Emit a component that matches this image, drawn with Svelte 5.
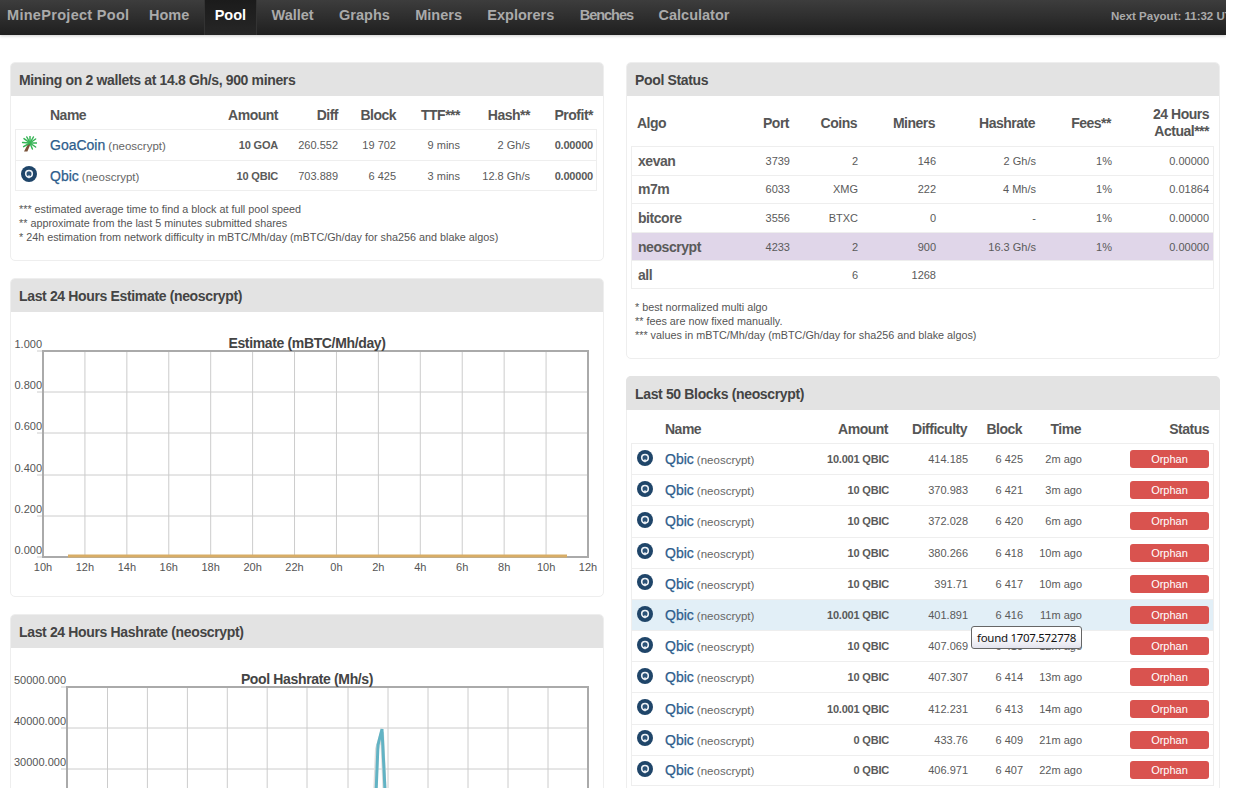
<script>
  const navItems = ['Home', 'Pool', 'Wallet', 'Graphs', 'Miners', 'Explorers', 'Benches', 'Calculator'];
  const wallets = [
    { icon: 'goa', name: 'GoaCoin', amount: '10 GOA', diff: '260.552', block: '19 702', ttf: '9 mins', hash: '2 Gh/s', profit: '0.00000' },
    { icon: 'qbic', name: 'Qbic', amount: '10 QBIC', diff: '703.889', block: '6 425', ttf: '3 mins', hash: '12.8 Gh/s', profit: '0.00000' }
  ];
  const algos = [
    ['xevan', '3739', '2', '146', '2 Gh/s', '1%', '0.00000'],
    ['m7m', '6033', 'XMG', '222', '4 Mh/s', '1%', '0.01864'],
    ['bitcore', '3556', 'BTXC', '0', '-', '1%', '0.00000'],
    ['neoscrypt', '4233', '2', '900', '16.3 Gh/s', '1%', '0.00000'],
    ['all', '', '6', '1268', '', '', '']
  ];
  const blocks = [
    ['10.001 QBIC', '414.185', '6 425', '2m ago'],
    ['10 QBIC', '370.983', '6 421', '3m ago'],
    ['10 QBIC', '372.028', '6 420', '6m ago'],
    ['10 QBIC', '380.266', '6 418', '10m ago'],
    ['10 QBIC', '391.71', '6 417', '10m ago'],
    ['10.001 QBIC', '401.891', '6 416', '11m ago'],
    ['10 QBIC', '407.069', '6 415', '12m ago'],
    ['10 QBIC', '407.307', '6 414', '13m ago'],
    ['10.001 QBIC', '412.231', '6 413', '14m ago'],
    ['0 QBIC', '433.76', '6 409', '21m ago'],
    ['0 QBIC', '406.971', '6 407', '22m ago']
  ];
  const hoursX = ['10h', '12h', '14h', '16h', '18h', '20h', '22h', '0h', '2h', '4h', '6h', '8h', '10h', '12h'];
  const estX = hoursX.map((_, i) => 43 + (i * 545) / 13);
  const estY = [
    ['1.000', 351], ['0.800', 392], ['0.600', 433], ['0.400', 475], ['0.200', 516], ['0.000', 557]
  ];
  const hashX = [67, 107.5, 147.4, 187.4, 227.3, 267.2, 307, 348, 388, 428, 468, 508, 548, 588];
  const hashY = [
    ['50000.000', 687], ['40000.000', 728], ['30000.000', 769], ['20000.000', 810], ['10000.000', 851], ['0.000', 892]
  ];
</script>

{#snippet qbic()}
  <svg class="coin" viewBox="0 0 16 16" aria-hidden="true">
    <circle cx="8" cy="8" r="8" fill="#1f4569" />
    <circle cx="8" cy="7.8" r="3.3" fill="#2c5378" stroke="#eef2f6" stroke-width="1.6" />
    <path d="M8 9.2v3" stroke="#eef2f6" stroke-width="1.3" />
  </svg>
{/snippet}

{#snippet goa()}
  <svg class="coin" viewBox="0 0 16 16" aria-hidden="true">
    <path d="M7.5 7 3 15.5h3.4L9.5 8z" fill="#7a5238" />
    <g stroke="#36b455" stroke-width="1.5" stroke-linecap="round">
      <path d="M9 7 9 .6" />
      <path d="M9 7 5.8 1" />
      <path d="M9 7 3 2.6" />
      <path d="M9 7 12.4 1" />
      <path d="M9 7 14.6 3" />
      <path d="M9 7 1.6 6.6" />
      <path d="M9 7 15.6 7" />
      <path d="M9 7 2.6 10.6" />
      <path d="M9 7 14.6 11" />
      <path d="M9 7 11.4 13" />
    </g>
  </svg>
{/snippet}

<div class="page">
  <nav class="nav">
    <span class="brand">MineProject Pool</span>
    {#each navItems as item}
      <span class="nav-item" class:active={item === 'Pool'} class:tight={item === 'Benches'}>{item}</span>
    {/each}
    <span class="nav-space"></span>
    <span class="payout">Next Payout: 11:32 UTC</span>
  </nav>

  <main class="columns">
    <div class="col">
      <section class="panel">
        <h2>Mining on 2 wallets at 14.8 Gh/s, 900 miners</h2>
        <div class="body">
          <table class="wallets">
            <colgroup><col class="w31" /><col class="w166" /><col class="w70" /><col class="w60" /><col class="w58" /><col class="w64" /><col class="w70" /><col class="w63" /></colgroup>
            <thead>
              <tr><th></th><th class="l">Name</th><th>Amount</th><th>Diff</th><th>Block</th><th>TTF***</th><th>Hash**</th><th>Profit*</th></tr>
            </thead>
            <tbody>
              {#each wallets as w}
                <tr>
                  <td class="ic">{#if w.icon === 'goa'}{@render goa()}{:else}{@render qbic()}{/if}</td>
                  <td class="l"><span class="link">{w.name}</span> <span class="algo-tag">(neoscrypt)</span></td>
                  <td class="b">{w.amount}</td><td>{w.diff}</td><td>{w.block}</td><td>{w.ttf}</td><td>{w.hash}</td><td class="b">{w.profit}</td>
                </tr>
              {/each}
            </tbody>
          </table>
          <p class="notes">*** estimated average time to find a block at full pool speed<br />** approximate from the last 5 minutes submitted shares<br />* 24h estimation from network difficulty in mBTC/Mh/day (mBTC/Gh/day for sha256 and blake algos)</p>
        </div>
      </section>

      <section class="panel">
        <h2>Last 24 Hours Estimate (neoscrypt)</h2>
        <svg class="chart" width="592" height="284" viewBox="11 312 592 284">
          {#each estX as x}<line class="grid" x1={x} x2={x} y1="351" y2="557" />{/each}
          {#each estY as [label, y]}
            <line class="grid" x1="37" x2="588" y1={y} y2={y} />
            <text class="tick" x="42" y={y - 3} text-anchor="end">{label}</text>
          {/each}
          <rect class="frame" x="43" y="351" width="545" height="206" />
          {#each hoursX as h, i}<text class="tick" x={estX[i]} y="571" text-anchor="middle">{h}</text>{/each}
          <text class="title" x="307" y="348" text-anchor="middle">Estimate (mBTC/Mh/day)</text>
          <line x1="68" x2="567" y1="556" y2="556" stroke="#d8ad66" stroke-width="3" />
        </svg>
      </section>

      <section class="panel">
        <h2>Last 24 Hours Hashrate (neoscrypt)</h2>
        <svg class="chart" width="592" height="284" viewBox="11 648 592 284">
          {#each hashX as x}<line class="grid" x1={x} x2={x} y1="687" y2="892" />{/each}
          {#each hashY as [label, y]}
            <line class="grid" x1="61" x2="588" y1={y} y2={y} />
            <text class="tick" x="66" y={y - 3} text-anchor="end">{label}</text>
          {/each}
          <rect class="frame" x="67" y="687" width="521" height="205" />
          <text class="title" x="307" y="684" text-anchor="middle">Pool Hashrate (Mh/s)</text>
          <path d="M371 892 L377 749 L382 732 L389 892" fill="none" stroke="#ddd" stroke-width="4" />
          <path d="M372 892 L378 745 L382 729 L390 892" fill="none" stroke="#62b3c4" stroke-width="3" />
        </svg>
      </section>
    </div>

    <div class="col">
      <section class="panel">
        <h2>Pool Status</h2>
        <div class="body">
          <table class="status">
            <colgroup><col class="w100" /><col class="w63" /><col class="w68" /><col class="w78" /><col class="w100" /><col class="w76" /><col class="w98" /></colgroup>
            <thead>
              <tr><th class="l">Algo</th><th>Port</th><th>Coins</th><th>Miners</th><th>Hashrate</th><th>Fees**</th><th>24 Hours<br />Actual***</th></tr>
            </thead>
            <tbody>
              {#each algos as a}
                <tr class:sel={a[0] === 'neoscrypt'}>
                  <td class="l name">{a[0]}</td>
                  {#each a.slice(1) as v}<td>{v}</td>{/each}
                </tr>
              {/each}
            </tbody>
          </table>
          <p class="notes">* best normalized multi algo<br />** fees are now fixed manually.<br />*** values in mBTC/Mh/day (mBTC/Gh/day for sha256 and blake algos)</p>
        </div>
      </section>

      <section class="panel tall">
        <h2>Last 50 Blocks (neoscrypt)</h2>
        <div class="body">
          <table class="blocks">
            <colgroup><col class="w30" /><col class="w140" /><col class="w92" /><col class="w79" /><col class="w55" /><col class="w59" /><col class="w128" /></colgroup>
            <thead>
              <tr><th></th><th class="l">Name</th><th>Amount</th><th>Difficulty</th><th>Block</th><th>Time</th><th>Status</th></tr>
            </thead>
            <tbody>
              {#each blocks as b}
                <tr class:hover={b[2] === '6 416'}>
                  <td class="ic">{@render qbic()}</td>
                  <td class="l"><span class="link">Qbic</span> <span class="algo-tag">(neoscrypt)</span></td>
                  <td class="b">{b[0]}</td><td>{b[1]}</td><td>{b[2]}</td><td>{b[3]}</td>
                  <td><span class="badge">Orphan</span></td>
                </tr>
              {/each}
            </tbody>
          </table>
        </div>
        <div class="tooltip">found 1707.572778</div>
      </section>
    </div>
  </main>
</div>

<style>
  :global(body) {
    margin: 0;
    background: #fff;
  }
  .page {
    width: 1226px;
    height: 788px;
    overflow: hidden;
    font-family: "Liberation Sans", Arial, sans-serif;
    color: #555;
  }
  .nav {
    display: flex;
    align-items: stretch;
    height: 35px;
    padding-left: 7px;
    background: linear-gradient(#3d3d3d, #1f1f1f);
    box-shadow: 0 1px 3px rgba(0, 0, 0, 0.2);
    color: #aaa;
    font-size: 14.5px;
    font-weight: bold;
    line-height: 30px;
    white-space: nowrap;
  }
  .brand {
    width: 131px;
    letter-spacing: 0.3px;
  }
  .nav-item {
    padding: 0 11px;
    margin-right: 3.4px;
  }
  .nav-item.tight {
    letter-spacing: -1px;
  }
  .nav-item.active {
    color: #fff;
    background: linear-gradient(#1b1b1b, #262626);
    box-shadow: inset 1px 0 #333, inset -1px 0 #333;
  }
  .nav-space {
    flex: 1;
    min-width: 0;
  }
  .payout {
    flex: none;
    width: 115px;
    overflow: hidden;
    font-size: 11.5px;
    line-height: 32px;
  }
  .columns {
    display: grid;
    grid-template-columns: 594px 594px;
    column-gap: 22px;
    padding: 27px 6px 0 10px;
  }
  .col {
    display: flex;
    flex-direction: column;
    gap: 17px;
  }
  .panel {
    position: relative;
    flex: none;
    border: 1px solid #eee;
    border-radius: 5px;
    background: #fff;
    overflow: hidden;
  }
  .tall {
    overflow: visible;
  }
  h2 {
    margin: -1px -1px 0;
    height: 34px;
    padding: 0 9px;
    background: #e3e3e3;
    border-radius: 5px 5px 0 0;
    color: #444;
    font-size: 14px;
    font-weight: bold;
    letter-spacing: -0.35px;
    line-height: 37px;
  }
  .body {
    padding: 0 4px 16px;
  }
  .chart {
    display: block;
  }
  .grid {
    stroke: #ccc;
    stroke-width: 1;
  }
  .frame {
    fill: none;
    stroke: #aaa;
    stroke-width: 2;
  }
  .tick {
    fill: #555;
    font-size: 11px;
  }
  .title {
    fill: #444;
    font-size: 14px;
    font-weight: bold;
    letter-spacing: -0.35px;
  }
  table {
    width: 583px;
    table-layout: fixed;
    border-collapse: separate;
    border-spacing: 0;
    font-size: 11px;
    color: #5a5a5a;
  }
  .wallets {
    width: 582px;
  }
  .w30 { width: 30px; }
  .w31 { width: 31px; }
  .w55 { width: 55px; }
  .w58 { width: 58px; }
  .w59 { width: 59px; }
  .w60 { width: 60px; }
  .w63 { width: 63px; }
  .w64 { width: 64px; }
  .w68 { width: 68px; }
  .w70 { width: 70px; }
  .w76 { width: 76px; }
  .w78 { width: 78px; }
  .w79 { width: 79px; }
  .w92 { width: 92px; }
  .w98 { width: 98px; }
  .w100 { width: 100px; }
  .w128 { width: 128px; }
  .w140 { width: 140px; }
  .w166 { width: 166px; }
  th, td {
    padding: 0 4px;
    text-align: right;
    white-space: nowrap;
  }
  th {
    padding-top: 5px;
    font-size: 14px;
    font-weight: bold;
    color: #555;
    letter-spacing: -0.5px;
  }
  .status th, .blocks th {
    padding-right: 5px;
  }
  td {
    border-top: 1px solid #eee;
    box-sizing: border-box;
    height: 31.2px;
  }
  tbody tr:last-child td {
    border-bottom: 1px solid #eee;
  }
  tbody tr td:first-child {
    border-left: 1px solid #eee;
  }
  tbody tr td:last-child {
    border-right: 1px solid #eee;
  }
  .wallets tbody tr td:last-child {
    padding-right: 3px;
  }
  thead tr {
    height: 33px;
  }
  .l {
    text-align: left;
  }
  td.b {
    font-weight: bold;
    letter-spacing: -0.2px;
  }
  .ic {
    padding: 0 0 0 5px;
    text-align: left;
  }
  .coin {
    display: block;
    width: 16px;
    height: 16px;
    margin-top: -3px;
  }
  .link {
    color: #2e5d8c;
    font-size: 14px;
    -webkit-text-stroke: 0.25px #2e5d8c;
  }
  .algo-tag {
    font-size: 11.5px;
    color: #666;
  }
  .notes {
    margin: 11px 0 0 4px;
    font-size: 10.8px;
    line-height: 14px;
    color: #555;
  }
  .status thead tr {
    height: 50px;
  }
  .status th {
    padding-top: 4px;
    line-height: 17px;
  }
  .status td {
    height: 28.6px;
  }
  .status .name {
    padding-left: 6px;
    font-size: 14px;
    font-weight: bold;
    letter-spacing: -0.45px;
  }
  .status th.l {
    padding-left: 6px;
  }
  .sel td {
    background: #e0d6e9;
  }
  .hover td {
    background: #e2eff7;
  }
  .badge {
    display: block;
    width: 79px;
    height: 18px;
    margin-left: auto;
    border-radius: 3px;
    background: #d9534f;
    color: #fff;
    font-size: 11px;
    line-height: 18px;
    text-align: center;
  }
  .tooltip {
    position: absolute;
    left: 344px;
    top: 249px;
    width: 111px;
    height: 23px;
    box-sizing: border-box;
    border: 1px solid #666;
    border-radius: 3px;
    background: linear-gradient(#fff 40%, #e3e3ee);
    color: #111;
    font-family: "Noto Sans", sans-serif;
    font-size: 11.5px;
    letter-spacing: -0.3px;
    line-height: 21px;
    text-align: center;
    white-space: nowrap;
  }
</style>
